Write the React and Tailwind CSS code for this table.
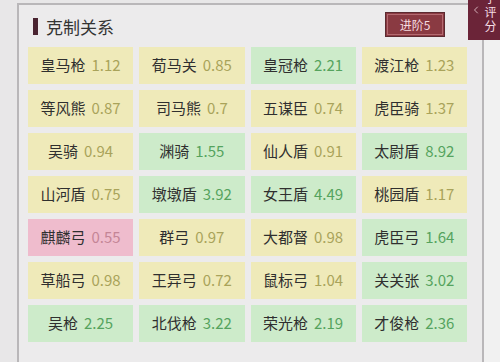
import { ChevronLeft } from 'lucide-react'

const TONE = {
  Y: { bg: 'bg-[#efeab9]', num: 'text-[#a9a35a]' },
  G: { bg: 'bg-[#cdebca]', num: 'text-[#55a35e]' },
  P: { bg: 'bg-[#efbccd]', num: 'text-[#c48596]' },
}

const ROWS = [
  [['皇马枪', '1.12', 'Y'], ['荀马关', '0.85', 'Y'], ['皇冠枪', '2.21', 'G'], ['渡江枪', '1.23', 'Y']],
  [['等风熊', '0.87', 'Y'], ['司马熊', '0.7', 'Y'], ['五谋臣', '0.74', 'Y'], ['虎臣骑', '1.37', 'Y']],
  [['吴骑', '0.94', 'Y'], ['渊骑', '1.55', 'G'], ['仙人盾', '0.91', 'Y'], ['太尉盾', '8.92', 'G']],
  [['山河盾', '0.75', 'Y'], ['墩墩盾', '3.92', 'G'], ['女王盾', '4.49', 'G'], ['桃园盾', '1.17', 'Y']],
  [['麒麟弓', '0.55', 'P'], ['群弓', '0.97', 'Y'], ['大都督', '0.98', 'Y'], ['虎臣弓', '1.64', 'G']],
  [['草船弓', '0.98', 'Y'], ['王异弓', '0.72', 'Y'], ['鼠标弓', '1.04', 'Y'], ['关关张', '3.02', 'G']],
  [['吴枪', '2.25', 'G'], ['北伐枪', '3.22', 'G'], ['荣光枪', '2.19', 'G'], ['才俊枪', '2.36', 'G']],
]

function Celda({ nombre, valor, tono }) {
  const t = TONE[tono]
  return (
    <div className={`h-[37px] flex items-center justify-center gap-[6px] ${t.bg}`}>
      <span className="text-[#2f2f2f] text-[15px]">{nombre}</span>
      <span className={`text-[15px] ${t.num}`}>{valor}</span>
    </div>
  )
}

export default function App() {
  return (
    <div
      className="relative w-[500px] h-[362px] overflow-hidden bg-[#e8e7e8]"
      style={{ fontFamily: '"Noto Sans CJK SC", "Noto Sans", sans-serif' }}
    >
      <div className="absolute right-0 top-0 bottom-0 w-[16px] bg-[#f1f1f1]" />

      {/* Panel */}
      <div className="relative ml-[17px] mt-[3px] w-[467px] h-[420px] border-2 border-[#b9b7b9] bg-[#ecebec]">
        {/* Header */}
        <div className="h-[42px] flex items-center justify-between pl-[14px] pr-[37px]">
          <div className="flex items-center gap-[8px] pt-[1px]">
            <div className="w-[5px] h-[17px] bg-[#4a2431]" />
            <h1 className="text-[#333] text-[17px] leading-none">克制关系</h1>
          </div>
          <button className="w-[60px] h-[25px] mt-[-3px] bg-[#8a3a42] border border-[#5b2a30] flex items-center justify-center">
            <span className="w-[56px] h-[21px] border border-[#b36a70] flex items-center justify-center text-[12px] text-[#f5dde0] leading-none">
              进阶5
            </span>
          </button>
        </div>

        {/* Grid */}
        <div className="ml-[9px] w-[439px] grid grid-cols-4 gap-x-[6px] gap-y-[6px]">
          {ROWS.flat().map(([n, v, t], i) => (
            <Celda key={i} nombre={n} valor={v} tono={t} />
          ))}
        </div>
      </div>

      {/* Side tab */}
      <div className="absolute right-0 top-0 w-[32px] h-[40px] bg-[#6b2438] flex items-start pl-[2px] overflow-hidden">
        <ChevronLeft size={12} strokeWidth={1.5} className="text-[#f3dce2] mt-[4px]" />
        <span className="[writing-mode:vertical-rl] text-[12px] leading-[14px] tracking-[2px] text-[#f3dce2] mt-[-8px] ml-[1px]">
          字评分
        </span>
      </div>
    </div>
  )
}
